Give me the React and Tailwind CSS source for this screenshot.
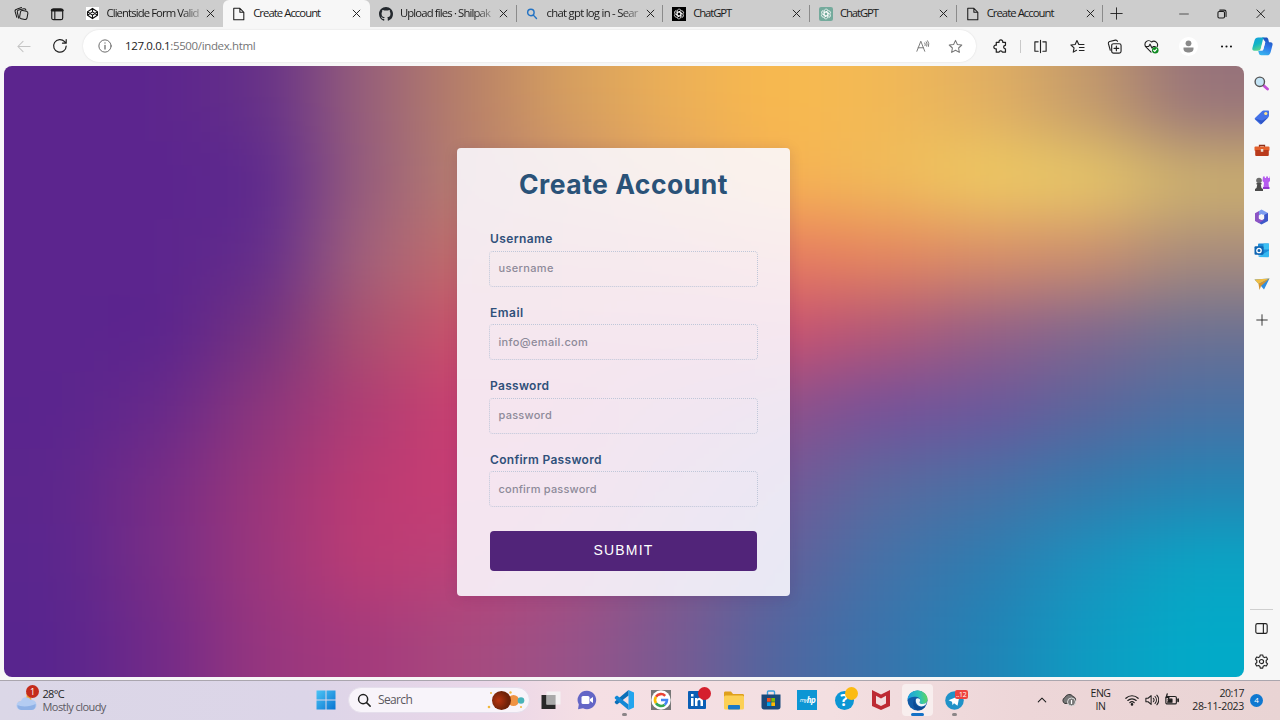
import React from "react";

const MESH = [
  ["#5c258e", "#5c258e", "#653088", "#98607a", "#b88168", "#d7a05f", "#ecb057", "#f8b94e", "#f2b956", "#e2b062", "#c39a6c", "#97737a"],
  ["#5c258e", "#5c258e", "#5c288e", "#985e7c", "#b8806e", "#cc9068", "#e4a45e", "#f8b252", "#f0bb5a", "#efcb62", "#e8c968", "#ceb26e"],
  ["#5c258e", "#5c258e", "#622c8b", "#a4647a", "#c46c68", "#cc6c68", "#d87064", "#e87c60", "#e6865f", "#da8e68", "#cc8e6e", "#a88a7c"],
  ["#5c258e", "#5a248e", "#74327f", "#ac526f", "#cc506a", "#cc5068", "#c85070", "#cb5070", "#b25678", "#955e86", "#80668f", "#6c7092"],
  ["#5a258e", "#66298a", "#8c367c", "#b03d74", "#cb4070", "#c04070", "#a84a80", "#8e508a", "#76509a", "#6c569c", "#5b659c", "#4a70a4"],
  ["#5c268d", "#762c86", "#9a367a", "#bc3b72", "#c83c74", "#b84878", "#90508c", "#725898", "#5a6a9e", "#4a70a4", "#3579ac", "#2584b4"],
  ["#5a268e", "#782d86", "#9c367c", "#bc3c74", "#bc4278", "#a84c80", "#80588e", "#62609a", "#4472a8", "#2e7cb0", "#1a92be", "#0aa4c4"],
  ["#58258e", "#722a88", "#97367e", "#a53a7c", "#a84a7e", "#985288", "#785a92", "#5066a0", "#3874ac", "#2083b6", "#0e9cc2", "#02aac8"],
];

function Mesh() {
  const cw = 1240 / 12;
  const ch = 611 / 8;
  const cells = [];
  for (let r = -2; r < 10; r++) {
    for (let c = -2; c < 14; c++) {
      const fill = MESH[Math.min(7, Math.max(0, r))][Math.min(11, Math.max(0, c))];
      cells.push(<rect key={r + "_" + c} x={c * cw} y={r * ch} width={cw + 1} height={ch + 1} fill={fill} />);
    }
  }
  return (
    <svg className="absolute inset-0 h-full w-full" viewBox="0 0 1240 611" preserveAspectRatio="none">
      <defs>
        <filter id="soft" filterUnits="userSpaceOnUse" x="-210" y="-160" width="1660" height="930" colorInterpolationFilters="sRGB">
          <feGaussianBlur stdDeviation="41 32" />
        </filter>
      </defs>
      <g filter="url(#soft)">{cells}</g>
    </svg>
  );
}

function Ico({ s = 16, sw = 1.1, children, className = "", vb = 16 }) {
  return (
    <svg width={s} height={s} viewBox={`0 0 ${vb} ${vb}`} fill="none" stroke="currentColor" strokeWidth={sw} strokeLinecap="round" strokeLinejoin="round" className={"shrink-0 " + className}>
      {children}
    </svg>
  );
}

const Page = () => (
  <Ico s={14} sw={1.2}><path d="M2 1.5h7l4.500 4.500v8.500H2zM9 1.5V6h4.500" /></Ico>
);
const Knot = ({ bg }) => (
  <svg width="14" height="14" viewBox="0 0 14 14" className="shrink-0">
    <rect width="14" height="14" rx={bg === "#000" ? 0 : 2} fill={bg} />
    <g fill="none" stroke="#fff" strokeWidth=".75">
      {[0, 60, 120, 180, 240, 300].map((a) => (
        <path key={a} transform={`rotate(${a} 7 7)`} d="M5.1 8.2V4.1a2.1 2.1 0 0 1 3.7-1.2M5.1 5.9L8.6 3.9" />
      ))}
    </g>
  </svg>
);
const CodePen = () => (
  <svg width="13" height="13" viewBox="0 0 13 13" className="shrink-0">
    <rect width="13" height="13" fill="#fff" />
    <path d="M6.5 1.5l5 3.3v3.4l-5 3.3-5-3.3V4.800zM1.5 4.8l5 3.3 5-3.3M1.5 8.2l5-3.3 5 3.3M6.5 1.5v3.4M6.5 8.1v3.4" fill="none" stroke="#111" strokeWidth="1.1" />
  </svg>
);
const GitHub = () => (
  <svg width="14" height="14" viewBox="0 0 16 16" className="shrink-0">
    <path fill="#24292e" d="M8 0C3.58 0 0 3.58 0 8c0 3.54 2.29 6.53 5.47 7.59.4.07.55-.17.55-.38 0-.19-.01-.82-.01-1.49-2.01.37-2.53-.49-2.69-.94-.09-.23-.48-.94-.82-1.13-.28-.15-.68-.52-.01-.53.63-.01 1.08.58 1.23.82.72 1.21 1.87.87 2.33.66.07-.52.28-.87.51-1.07-1.78-.2-3.64-.89-3.64-3.95 0-.87.31-1.59.82-2.15-.08-.2-.36-1.02.08-2.12 0 0 .67-.21 2.2.82a7.6 7.6 0 0 1 4 0c1.53-1.04 2.2-.82 2.2-.82.44 1.1.16 1.92.08 2.12.51.56.82 1.27.82 2.15 0 3.07-1.87 3.75-3.65 3.95.29.25.54.73.54 1.48 0 1.07-.01 1.93-.01 2.2 0 .21.15.46.55.38A8.01 8.01 0 0 0 16 8c0-4.42-3.58-8-8-8z" />
  </svg>
);
const BlueSearch = () => (
  <Ico s={12} sw={1.9} className="text-[#2272c3]"><circle cx="6.5" cy="6" r="4.3" /><path d="M9.8 9.5L14 14" /></Ico>
);

function Tab({ icon, label, active, fade, line, ls }) {
  return (
    <div className={"relative flex h-[27px] w-[146.7px] shrink-0 items-center pl-[9px] " + (active ? "rounded-t-md bg-[#f7f7f7]" : "")}>
      <span className="flex w-[21px] shrink-0 items-center">{icon}</span>
      <span className={"w-[93px] whitespace-nowrap text-[11.3px] " + ls + (fade ? " [mask-image:linear-gradient(to_right,black_80%,rgba(0,0,0,0.25)_100%)]" : "")}>{label}</span>
      <Ico s={9} sw={1.7} className="ml-[6px]"><path d="M2 2l12 12M14 2L2 14" /></Ico>
      {line && <span className="absolute right-0 top-[5px] h-[17px] w-px bg-[#8b8b8b]" />}
    </div>
  );
}

function TabStrip() {
  return (
    <div className="flex h-[27px] w-full items-center bg-[#cdcdcd] text-[#1b1b1b]">
      <div className="flex h-full w-[76.500px] shrink-0 items-center">
        <Ico s={15} className="ml-[14px]"><rect x="6.500" y="5" width="8" height="9" rx="2" transform="rotate(10 10 9)" /><path d="M5 13L3.500 6.500a2 2 0 0 1 1.500-2.300l5.500-1.200a2 2 0 0 1 2.200 1.200M3 12L1.200 6a2.200 2.200 0 0 1 1.600-2.600L8 1.600" /></Ico>
        <Ico s={14} sw={1.3} className="ml-[21px]"><rect x="2" y="2" width="12.5" height="12.500" rx="2" /><path d="M2.500 3.700h11.500" strokeWidth="3" /><path d="M5.500 5v9" /></Ico>
        <span className="ml-[12.5px] h-[16px] w-px bg-[#8b8b8b]" />
      </div>
      <Tab icon={<CodePen />} label="Clientside Form Valid" fade ls="tracking-[-0.9px]" />
      <Tab icon={<Page />} label="Create Account" active ls="tracking-[-0.95px]" />
      <Tab icon={<GitHub />} label="Upload files · Shilpak" fade line ls="tracking-[-0.85px]" />
      <Tab icon={<BlueSearch />} label="chat gpt log in - Sear" fade line ls="tracking-[-0.72px]" />
      <Tab icon={<Knot bg="#000" />} label="ChatGPT" line ls="tracking-[-1.1px]" />
      <Tab icon={<Knot bg="#74aa9c" />} label="ChatGPT" line ls="tracking-[-1.1px]" />
      <Tab icon={<Page />} label="Create Account" line ls="tracking-[-0.95px]" />
      <Ico s={13} className="ml-[7px]"><path d="M8 1v14M1 8h14" /></Ico>
      <div className="flex flex-1 items-center justify-end">
        <span className="flex w-[38px] justify-center"><Ico s={10}><path d="M1 8h14" /></Ico></span>
        <span className="flex w-[38px] justify-center"><Ico s={10} sw={1.7}><rect x="1.5" y="4" width="10.5" height="10.5" rx="2" /><path d="M4.5 1.8h7a3 3 0 0 1 3 3v7" /></Ico></span>
        <span className="flex w-[39px] justify-center"><Ico s={9.500} sw={1.6}><path d="M1.5 1.5l13 13M14.5 1.5l-13 13" /></Ico></span>
      </div>
    </div>
  );
}

const Copilot = () => (
  <svg width="21" height="19" viewBox="0 0 21 19">
    <defs>
      <linearGradient id="cpa" x1="0" y1="0" x2="0.4" y2="1"><stop stopColor="#159ee0" /><stop offset=".55" stopColor="#12b5c4" /><stop offset="1" stopColor="#5bd58d" /></linearGradient>
      <linearGradient id="cpb" x1="0.6" y1="0" x2="0.3" y2="1"><stop stopColor="#1c4fb8" /><stop offset=".5" stopColor="#2f78ea" /><stop offset="1" stopColor="#38b6ee" /></linearGradient>
    </defs>
    <path d="M10 0.5h4.300c1 0 1.6.6 1.9 1.6l.8 3.1h1.4c1.7 0 2.5 1.1 2.1 2.7l-1.8 7c-.5 2-1.7 3.4-3.8 3.4H9.200c-1.400 0-2-.8-2.400-2.200l-.6-2.300h3.300c1 0 1.600-.5 1.900-1.500l2-7.300z" fill="url(#cpb)" />
    <path d="M6.300.5h6.500c-1.300 0-1.500.7-1.900 2L8.900 11.300c-.5 1.700-1.400 2.500-3 2.500H2.300C.7 13.800 0 12.700.4 11.100L2.500 3.600C3 1.600 4.200.5 6.300.5z" fill="url(#cpa)" />
    <path d="M10.500 5.700h2.500l-1.700 6.500H8.800z" fill="#f7f7f7" />
  </svg>
);

function Slot({ w, children }) {
  return <span className={"flex shrink-0 items-center justify-center " + w}>{children}</span>;
}

function Toolbar() {
  return (
    <div className="flex h-[39px] w-full items-center bg-[#f7f7f7] pb-px text-[#222]">
      <Slot w="w-[46px]"><Ico s={15} className="text-[#c4c4c4]"><path d="M15 8H2M7.500 2.500L2 8l5.500 5.500" /></Ico></Slot>
      <Slot w="w-[28px]"><Ico s={16} sw={1.2}><path d="M14.200 8a6.300 6.300 0 1 1-1.600-4.300l1.400 1.400M14.200 1.500v3.700h-3.700" /></Ico></Slot>
      <div className="ml-[9px] flex h-[32px] w-[893px] items-center rounded-full bg-white shadow-[0_0_2px_rgba(0,0,0,0.12)]">
        <Ico s={14} className="ml-[15px] text-[#666]"><circle cx="8" cy="8" r="7" /><path d="M8 7.200v4.300M8 4.500v.2" strokeWidth="1.400" /></Ico>
        <span className="ml-[13px] whitespace-nowrap text-[11.5px] tracking-[-0.36px] text-[#757575]"><span className="text-[#1b1b1b]">127.0.0.1</span>:5500/index.html</span>
        <div className="ml-auto mr-[13px] flex items-center gap-[18px] text-[#777]">
          <Ico s={14}><path d="M1 14L5.500 2.500 10 14M2.500 10h6M10 4.500a3 3 0 0 1 .4 3M11.700 3.200a5 5 0 0 1 .6 5M13.300 2a7 7 0 0 1 1 6.500" /></Ico>
          <Ico s={15}><path d="M8 1.500l2 4.300 4.700.6-3.400 3.200.8 4.700L8 12l-4.100 2.300.8-4.700L1.300 6.400 6 5.800z" /></Ico>
        </div>
      </div>
      <Slot w="w-[48px]"><Ico s={15} sw={1.300}><path d="M3.500 3.500h3a2 2 0 1 1 3.800 0h3v3.200a1.900 1.900 0 1 0 0 3.800V14H10a1.800 1.800 0 0 0-3.500 0h-3v-3.500a2 2 0 1 1 0-3.800z" /></Ico></Slot>
      <span className="-ml-[4px] h-[13px] w-px bg-[#c9c9c9]" />
      <Slot w="w-[38px]"><Ico s={15} sw={1.200}><path d="M5.500 3H2v10h3.500M10.500 3H14v10h-3.500M8 1.500v13" /></Ico></Slot>
      <Slot w="w-[37px]"><Ico s={15} sw={1.200}><path d="M7 12l-3.500 2 .8-4.500L1 6.400l4.500-.6L7.400 1.700l2 4.100h5.500M10 9h5M10 12.300h5" /></Ico></Slot>
      <Slot w="w-[37px]"><Ico s={15} sw={1.200}><rect x="5" y="5" width="10" height="10" rx="2" /><path d="M10 7.500v5M7.500 10h5M3.500 12L1.500 5a2 2 0 0 1 1.300-2.300L9 1.200a2 2 0 0 1 2.200 1.300" /></Ico></Slot>
      <Slot w="w-[36px]">
        <Ico s={15} sw={1.200}><path d="M7.500 14L2 8.500a4 4 0 0 1 6-5.300 4 4 0 0 1 6 5M1.500 8H5l1.500-2.500 2 4L10 8h2" /><circle cx="12" cy="12" r="3.500" fill="#108a22" stroke="none" /><path d="M10.300 12l1.200 1.200 2-2.300" stroke="#fff" /></Ico>
      </Slot>
      <Slot w="w-[39px]">
        <svg width="19" height="19" viewBox="0 0 19 19"><circle cx="9.500" cy="9.500" r="9.500" fill="#fff" /><circle cx="9.500" cy="6.300" r="2.900" fill="#8a8a8a" /><path d="M4.500 10.500h10v1.500c0 2.500-2.500 3.500-5 3.500s-5-1-5-3.500z" fill="#8a8a8a" /></svg>
      </Slot>
      <Slot w="w-[37px]"><Ico s={13} sw={0}><g fill="#111"><circle cx="2.500" cy="8" r="1.300" /><circle cx="8" cy="8" r="1.300" /><circle cx="13.500" cy="8" r="1.300" /></g></Ico></Slot>
      <Slot w="w-[34px]"><Copilot /></Slot>
    </div>
  );
}

function Sidebar() {
  return (
    <aside className="flex w-[35px] shrink-0 flex-col items-center bg-[#f7f7f7] pt-px text-[#222]">
      <div className="grid auto-rows-[33.4px] place-items-center">
        <svg width="15" height="15" viewBox="0 0 15 15"><path d="M9 9l4.500 4" stroke="#c14fd6" strokeWidth="2.800" strokeLinecap="round" /><circle cx="5.800" cy="5.800" r="4.700" fill="#c4e4f5" stroke="#555" strokeWidth="1.400" /></svg>
        <svg width="16" height="16" viewBox="0 0 16 16"><path d="M1 9L8 2.300c.5-.5 1-.8 2-.8h4c.6 0 1 .4 1 1v4c0 .8-.3 1.300-.8 1.900L7.500 15c-.6.500-1.200.5-1.700 0L1 10.500c-.5-.5-.5-1 0-1.500z" fill="#4472e8" /><path d="M1 9.800l6.500 5.200L14 8.500l-6 3z" fill="#3057c8" /><circle cx="11.800" cy="4.500" r="1.600" fill="#ffe28a" /></svg>
        <svg width="16" height="14" viewBox="0 0 16 14"><path d="M5.500 4V2.500h5V4" fill="none" stroke="#8a2f1b" strokeWidth="1.300" /><rect x=".5" y="3.500" width="15" height="4.500" rx="1" fill="#e3602c" /><rect x="1.200" y="7" width="13.600" height="6" rx="1" fill="#b93b1c" /><rect x="6.800" y="6" width="2.500" height="2.800" fill="#e8ddd2" /></svg>
        <svg width="16" height="17" viewBox="0 0 16 17"><path d="M9 1.500h1.800V3h1.300V1.500H14V3h1.500V1.500H16V6l-1.500 1.500.5 5H9.500l.5-5L8.500 6z" fill="#b65cf0" /><path d="M9 12h6.500v2H9z" fill="#9038cc" /><circle cx="5" cy="5.500" r="2.800" fill="#6d6d6d" /><path d="M2.500 8h5v1.500H6.700L7.500 13 9 14v2H1v-2l1.500-1 .8-3.500h-.8z" fill="#4b4b4b" /></svg>
        <svg width="15" height="16" viewBox="0 0 15 16"><path d="M7.500.5L14 4v4l-4-2.500-5 2V2z" fill="#7c9df0" /><path d="M14 4v8l-6.500 3.500L4 13.500 10 10V6z" fill="#3e58c8" /><path d="M5 2L1 4.300V12l4 2.300L10 11l-5-1z" fill="#8b54c4" /><path d="M7.500 5l2.700 1.500v3L7.500 11 4.800 9.500v-3z" fill="#f7f7f7" /></svg>
        <svg width="16" height="15" viewBox="0 0 16 15"><rect x="4" y=".5" width="11" height="12" rx="1" fill="#1a8ad6" /><path d="M9.500.5H15v6H9.500z" fill="#3cc0f4" /><path d="M4 14l11-6.500V13c0 .8-.4 1.300-1.200 1.300z" fill="#35b8f1" /><rect x=".5" y="3.300" width="9" height="8.500" rx="1" fill="#0f65b3" /><circle cx="5" cy="7.500" r="2.200" fill="none" stroke="#fff" strokeWidth="1.300" /></svg>
        <svg width="16" height="13" viewBox="0 0 16 13"><path d="M.5 1.500L15.500.5 10 11.500 7 8z" fill="#2f8de0" /><path d="M.5 1.500L15.500.5 4.500 6z" fill="#f0bd42" /><path d="M4.500 6l11-5.500L7 8l-1.500 4z" fill="#d6932c" /></svg>
      </div>
      <Ico s={12} sw={1.200} className="mt-[13px]"><path d="M8 1v14M1 8h14" /></Ico>
      <div className="flex-1" />
      <span className="h-px w-[23px] bg-[#cfcfcf]" />
      <Ico s={13} sw={1.400} className="mt-[12px]"><rect x="1" y="2" width="14" height="12" rx="2" /><path d="M10.300 2v12" /></Ico>
      <Ico s={15} sw={1.200} className="mb-[11px] mt-[19px]"><circle cx="8" cy="8" r="2.200" /><path d="M6.700 1h2.600l.5 2 1.400.8 2-.6 1.300 2.300-1.500 1.400v2.200l1.500 1.400-1.300 2.300-2-.6-1.400.8-.5 2H6.700l-.5-2-1.400-.8-2 .6-1.300-2.300L3 9.100V6.900L1.500 5.500l1.300-2.300 2 .6L6.200 3z" /></Ico>
    </aside>
  );
}

function Field({ label, ls, ph, pls }) {
  return (
    <div className="flex h-[73.600px] flex-col">
      <label className={"flex h-[20.500px] items-center pl-px text-[12px] font-semibold text-[#30507a] " + ls}>{label}</label>
      <div className={"mt-px flex h-[36px] w-[269px] items-center rounded-[4px] border border-dotted border-[#bfc7d9] pl-[8.500px] text-[11px] font-medium text-[#8d8a99] " + pls}>{ph}</div>
    </div>
  );
}

function FormCard() {
  return (
    <main className="relative ml-[453px] mt-[82px] flow-root h-[448px] w-[333px] rounded-[4px] bg-[rgba(250,249,255,0.89)] px-[32px] font-[Inter,sans-serif] shadow-[0_2px_14px_rgba(60,20,80,0.15)]">
      <h1 className="mt-[17px] h-[38px] w-full whitespace-nowrap text-center text-[26.500px] font-bold leading-[38px] tracking-[0.500px] text-[#2a5278]">Create Account</h1>
      <div className="mt-[26px]">
        <Field label="Username" ls="tracking-[0.4px]" ph="username" pls="tracking-[0.35px]" />
        <Field label="Email" ls="tracking-[0.5px]" ph="info@email.com" pls="tracking-[0.35px]" />
        <Field label="Password" ls="tracking-[0.3px]" ph="password" pls="tracking-[0.25px]" />
        <Field label="Confirm Password" ls="tracking-[0.3px]" ph="confirm password" pls="tracking-[0.2px]" />
      </div>
      <button className="ml-px mt-[7.600px] flex h-[40px] w-[267px] items-center justify-center rounded-[4px] bg-[#512479] pb-px font-['Liberation_Sans',sans-serif] text-[14px] tracking-[1.200px] text-white">SUBMIT</button>
    </main>
  );
}

const apps = [
  <svg width="20" height="20" viewBox="0 0 20 20"><path d="M.5 5h14v14H.5z" fill="#282828" /><path d="M5.500 1.500h14v13h-14z" fill="#f4f4f4" fillOpacity=".85" /><path d="M5.500 5h9v9.500h-9z" fill="#a9a9a9" /></svg>,
  <svg width="20" height="20" viewBox="0 0 20 20"><path d="M10 .8a9.200 9.200 0 1 1-4 17.500L1 19.300 1.800 14.500A9.200 9.200 0 0 1 10 .8z" fill="#6466c6" /><rect x="4.500" y="6" width="8" height="8" rx="1.500" fill="#fff" /><path d="M13 9l3-2v6l-3-2z" fill="#fff" /></svg>,
  <svg width="20" height="20" viewBox="0 0 20 20"><path d="M14.500 0L20 2.500v15L14.500 20z" fill="#24a5ee" /><path d="M14.500 0v5.500L3 14.500 0.800 13v-1.500z" fill="#0b6fb8" /><path d="M.8 7L3 5.500l11.500 9V20L.8 8.500z" fill="#1188d6" /></svg>,
  <svg width="20" height="20" viewBox="0 0 20 20"><rect width="20" height="20" fill="#777" /><circle cx="10" cy="10" r="9.700" fill="#fff" /><g fill="none" strokeWidth="2.600"><path d="M14.200 5.800A6 6 0 0 0 5 6.700" stroke="#ea4335" /><path d="M5 6.700a6 6 0 0 0 0 6.600" stroke="#fbbc05" /><path d="M5 13.300a6 6 0 0 0 8.700 1.400" stroke="#34a853" /><path d="M13.700 14.700A6 6 0 0 0 16 10h-6" stroke="#4285f4" /></g></svg>,
  <div className="relative"><svg width="18" height="18" viewBox="0 0 18 18"><rect width="18" height="18" rx="1" fill="#0b5fb5" /><path d="M3 7h2.500v8H3zM3 3h2.500v2.500H3zM7 7h2.400v1.200c.6-1 1.500-1.400 2.600-1.400 2.200 0 3 1.500 3 3.700V15h-2.500v-4c0-1.200-.3-2-1.300-2-1.200 0-1.700.8-1.700 2v4H7z" fill="#fff" /></svg><span className="absolute -right-[5px] -top-[4px] h-[13px] w-[13px] rounded-full bg-[#d51f2d]" /></div>,
  <svg width="20" height="19" viewBox="0 0 20 19"><path d="M0 2c0-1 .5-1.500 1.500-1.500H7L9 3h9.500c1 0 1.500.5 1.500 1.500V8H0z" fill="#dfa01c" /><rect y="4.500" width="20" height="14" rx="1.500" fill="#fcd056" /><rect x="4" y="14" width="12" height="4.500" rx="1" fill="#1979c8" /></svg>,
  <svg width="20" height="20" viewBox="0 0 20 20"><path d="M6.500 5V2c0-.6.400-1 1-1h5c.6 0 1 .4 1 1v3" fill="none" stroke="#3aa0dc" strokeWidth="1.400" /><path d="M.5 4.500h19V17c0 1.500-1 2.500-2.500 2.500H3C1.500 19.500.5 18.500.5 17z" fill="#194a7c" /><path d="M6 8h3.700v3.700H6z" fill="#f25022" /><path d="M10.300 8H14v3.700h-3.700z" fill="#7fba00" /><path d="M6 12.300h3.700V16H6z" fill="#00a4ef" /><path d="M10.300 12.300H14V16h-3.700z" fill="#ffb900" /></svg>,
  <div className="flex h-[20px] w-[20px] items-center justify-center bg-[#0c96d4] text-[8px] font-bold italic tracking-[-0.5px] text-white"><span className="text-[6px] font-normal">my</span>hp</div>,
  <div className="relative flex h-[19px] w-[19px] items-center justify-center rounded-full bg-[#0c96d4] text-[16px] font-bold leading-none text-white">?<span className="absolute -right-[4px] -top-[4px] h-[13px] w-[13px] rounded-full bg-[#fcbb12]" /></div>,
  <svg width="18" height="20" viewBox="0 0 18 20"><path d="M0 0l9 4.500L18 0v16l-9 4-9-4zM4 5.800v7.700L9 16l5-2.500V5.800L9 8.500z" fill="#bd2a33" fillRule="evenodd" /></svg>,
  <svg width="21" height="21" viewBox="0 0 21 21"><defs><linearGradient id="eg" x1="0" x2="1" y1=".4" y2=".3"><stop stopColor="#1b9de2" /><stop offset=".6" stopColor="#2fc3b5" /><stop offset="1" stopColor="#62d65a" /></linearGradient></defs><circle cx="10.500" cy="10.500" r="10" fill="#115ba8" /><path d="M.5 10C1 4 5 .5 10.500.5c6 0 10 4.500 10 8.500 0 3-2 5-5 5-2 0-3-.8-3-1.800 0-.6.7-.9.7-2 0-1.800-2-3.400-4.500-3.400C4.500 6.800 1 8.500.5 10z" fill="url(#eg)" /><path d="M8 8.500c-1.500 4 1.500 8.500 6 8.500 2 0 3.500-.5 4.500-1-1.500 3-4.500 4.500-8 4.500-4-1-6-8-2.500-12z" fill="#0c4a94" /><path d="M9 9c1.500-1.500 4.200-.4 4.200 1.300 0 1-.7 1.400-.7 2 0 1 1 1.800 3 1.800 2 0 3.500-.8 4.300-2-.3 2.500-2 4.300-5.300 4.300C10.500 16.400 8 12.500 9 9z" fill="#eef5fa" /></svg>,
  <div className="relative"><svg width="19" height="19" viewBox="0 0 19 19"><circle cx="9.500" cy="9.500" r="9.300" fill="#2092c8" /><path d="M3.500 9.300l11-4.500-2 10-3.500-2.500-1.500 2-.5-3.500z" fill="#fff" /></svg><span className="absolute -right-[4px] -top-px flex h-[9px] w-[13px] items-center justify-center rounded-[2px] bg-[#ee4440] text-[7px] leading-none tracking-[-0.3px] text-white">..12</span></div>,
];

function Taskbar() {
  return (
    <footer className="flex h-[40px] w-full items-center border-t border-[#aaa6ae] bg-[linear-gradient(to_right,#dbd7e7_0%,#dcd5e8_24%,#ead6e8_38%,#f5dfe4_46%,#f3dfe1_65%,#edd6d8_80%,#e9d4d4_100%)] pb-px text-[#1f1f1f]">
      <div className="flex w-[316px] shrink-0 items-center">
        <div className="relative ml-[16px] h-[24px] w-[22px]">
          <svg width="22" height="24" viewBox="0 0 22 24"><path d="M2 13a6 6 0 0 0 8-8c5 1 7 6 4 10z" fill="#f4a135" /><path d="M5 22a4.500 4.500 0 0 1 0-9 5.500 5.500 0 0 1 10-1 5 5 0 0 1 1 10z" fill="#b4ccf2" /><path d="M5 22a4.500 4.500 0 0 1-3.500-5c3 2 13 2 18-1 .5 3-1 6-4 6z" fill="#8fb1e6" /></svg>
          <span className="absolute -right-px -top-[3px] flex h-[13px] w-[13px] items-center justify-center rounded-full bg-[#c42b1c] text-[9px] leading-none text-white">1</span>
        </div>
        <div className="ml-[4.500px] flex flex-col whitespace-nowrap text-[11px] leading-[13px]">
          <span className="tracking-[-0.7px]">28°C</span>
          <span className="tracking-[-0.55px] text-[#5c5a63]">Mostly cloudy</span>
        </div>
      </div>
      <svg width="20" height="20" viewBox="0 0 20 20" className="shrink-0"><defs><linearGradient id="wg" x1="0" y1="0" x2="1" y2="1"><stop stopColor="#4cc4f5" /><stop offset="1" stopColor="#0874d1" /></linearGradient></defs><path d="M.5.5h9v9h-9zM10.500.5h9v9h-9zM.5 10.500h9v9h-9zM10.500 10.500h9v9h-9z" fill="url(#wg)" /></svg>
      <div className="ml-[12px] flex h-[26px] w-[182px] shrink-0 items-center rounded-full border border-[#e5dfec] bg-[#f8f4fa]">
        <Ico s={14} sw={1.700} className="ml-[8px]"><circle cx="7" cy="7" r="5.200" /><path d="M11 11l4 4" /></Ico>
        <span className="ml-[7px] text-[12px] tracking-[-0.65px] text-[#5b5960]">Search</span>
        <svg width="39" height="21" viewBox="0 0 39 21" className="ml-auto mr-[3px]"><defs><radialGradient id="pl" cx=".35"><stop stopColor="#b9340f" /><stop offset="1" stopColor="#6e2208" /></radialGradient></defs><circle cx="26.500" cy="10.500" r="5.500" fill="#ef9243" /><circle cx="34" cy="10.500" r="3.300" fill="#48b3b8" /><circle cx="14.500" cy="10.500" r="9.500" fill="url(#pl)" /><g fill="#f1b83c"><circle cx="4" cy="3" r="1" /><circle cx="2" cy="17" r="1.300" /><circle cx="23.500" cy="2.500" r="1.200" /><circle cx="34" cy="17" r="1" /></g></svg>
      </div>
      <div className="ml-[2.500px] grid h-full w-[440px] shrink-0 grid-cols-12">
        {apps.map((a, i) => (
          <div key={i} className="relative flex items-center justify-center">
            <div className={"flex h-[32px] w-[31px] items-center justify-center rounded-[4px] " + (i === 10 ? "bg-[#f8eeee]" : "")}>{a}</div>
            {i === 10 && <span className="absolute bottom-[3px] h-[3px] w-[13px] rounded-full bg-[#1471c6]" />}
            {(i === 2 || i === 11) && <span className="absolute bottom-[3px] h-[3px] w-[5px] rounded-full bg-[#8b8587]" />}
          </div>
        ))}
      </div>
      <div className="flex flex-1 items-center text-[10.500px] leading-[13px]">
        <Ico s={10} sw={1.700} className="ml-[64px]"><path d="M2 11l6-6 6 6" /></Ico>
        <svg width="16" height="14" viewBox="0 0 16 14" className="ml-[14px] shrink-0"><path d="M4 10.500a3.200 3.200 0 0 1 0-6 4.500 4.500 0 0 1 8-1 3.500 3.500 0 0 1 1.500 6z" fill="#777" stroke="#333" /><circle cx="10.500" cy="9" r="4" fill="#777" stroke="#ddd" /><path d="M10.500 7v4" stroke="#fff" strokeWidth="1.200" /></svg>
        <div className="ml-[12px] flex w-[24px] flex-col items-center tracking-[-0.500px]"><span>ENG</span><span>IN</span></div>
        <div className="ml-[12px] flex items-center gap-[6px]">
          <Ico s={14} sw={1.400}><path d="M1 6a10 10 0 0 1 14 0M3.200 8.500a7 7 0 0 1 9.600 0M5.500 11a3.700 3.700 0 0 1 5 0" /><circle cx="8" cy="13" r=".8" fill="currentColor" /></Ico>
          <Ico s={14} sw={1.200}><path d="M1 6v4h2.500L7 13V3L3.500 6zM9.500 6a3 3 0 0 1 0 4M11.500 4a6 6 0 0 1 0 8M13.500 2.500a8 8 0 0 1 0 11" /></Ico>
          <Ico s={14} sw={1.300}><rect x="1" y="4" width="12" height="8.500" rx="1.500" /><path d="M15 7v2.500" strokeWidth="2" /><path d="M5 7h3v3.500H3z" fill="currentColor" /><path d="M2.500 1l-1 4h3l-1 3" strokeWidth="1.500" /></Ico>
        </div>
        <div className="ml-auto mr-[6px] flex flex-col items-end whitespace-nowrap"><span className="tracking-[-0.450px]">20:17</span><span className="tracking-[-0.300px]">28-11-2023</span></div>
        <span className="mr-[17px] flex h-[13px] w-[13px] items-center justify-center rounded-full bg-[#0f78d0] text-[8px] leading-none text-white">4</span>
      </div>
    </footer>
  );
}

export default function App() {
  return (
    <div className="flex h-[720px] w-[1280px] flex-col overflow-hidden bg-[#f7f7f7] font-['Open_Sans','Noto_Sans',sans-serif]">
      <TabStrip />
      <Toolbar />
      <div className="flex h-[614px] w-full">
        <div className="relative ml-[4px] h-[611px] w-[1240px] shrink-0 overflow-hidden rounded-[8px]">
          <Mesh />
          <div className="flow-root"><FormCard /></div>
        </div>
        <Sidebar />
      </div>
      <Taskbar />
    </div>
  );
}
